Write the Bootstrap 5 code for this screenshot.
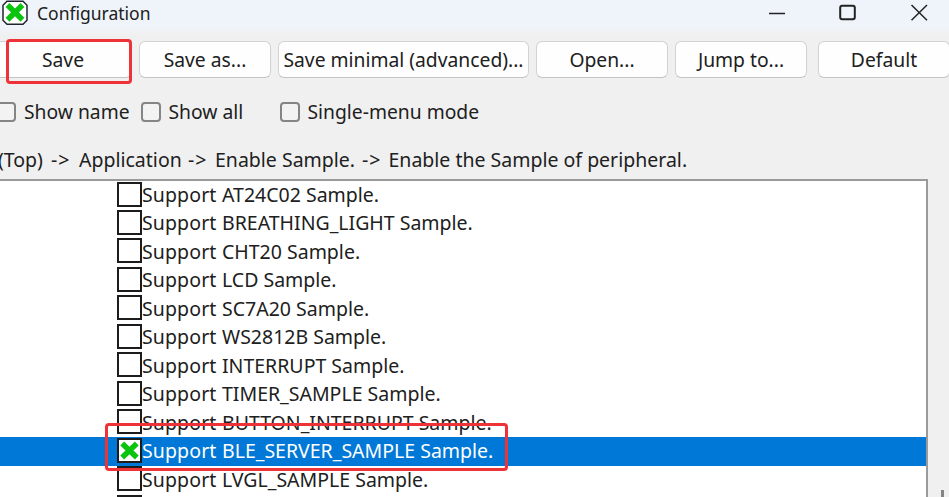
<!DOCTYPE html>
<html lang="en">
<head>
<meta charset="utf-8">
<title>Configuration</title>
<link rel="stylesheet" href="https://cdn.jsdelivr.net/npm/bootstrap@5.3.0/dist/css/bootstrap.min.css">
<style>
body{font-family:"Noto Sans","Open Sans",sans-serif;font-size:19.5px;line-height:28px;color:#202020;background:#f0f0f0;height:497px}
.title-bar{height:35px;background:linear-gradient(#eff4fb 75%,#f0f0f0);font-size:17.5px;padding-left:2px}
.title-bar .app-name{margin-left:9px;line-height:26px}
.win-ctl{width:71px;height:26px}
.win-set{margin-right:-4px}
.tool-bar{height:44px;padding-top:6px;gap:7px;margin-left:-6px}
.tool-bar .btn{height:37px;width:132px;padding:0;border:1.5px solid #d2d2d2;border-bottom-color:#c3c3c3;border-radius:6px;background:#fefefe;color:#202020;font:inherit;font-size:19.3px;line-height:34px;white-space:nowrap}
.tool-bar .b-save{width:138px}
.tool-bar .b-min{width:251px}
.tool-bar .b-def{margin-left:4px}
.opt-bar{height:62px;padding-top:20px;margin-left:-4px;font-size:19.3px}
.opt-bar .form-check-input{width:20px;height:20px;margin:3px 8px 0 0;border:2px solid #858585;border-radius:4px;background:#f3f3f3}
.opt-bar .form-check{min-height:0;padding:0;margin:0}
.opt-bar .form-check-input[type=checkbox]{float:none}
.opt-bar label{line-height:26px}
.w-a{width:144.5px}.w-b{width:139px}
.crumbs{height:38px;padding-top:6px;margin-left:-2px;font-size:19.5px;line-height:26px;white-space:pre}
.crumbs .arr{letter-spacing:1px}
.c1{width:53px}.c2{width:28px}.c3{width:109px}.c4{width:27px}.c5{width:147px}.c6{width:26.5px}
.tree{width:932px;height:331px;margin-left:-4px;border:2px solid #9a9a9a;border-bottom:0;background:#fff}
.tree-row{height:28.48px;padding-left:119px;line-height:27px;white-space:nowrap}
.tree-row.sel{background:#0078d7;color:#fff}
.tick{width:25px;height:25px;flex:none;margin-top:.5px;border:2px solid #1c1c1c;background:#fff}
.tree-row .w1{width:80px;letter-spacing:.12px}
.mark-box{border:3px solid #ed3338;border-radius:4px;pointer-events:none}
.m1{left:6px;top:39px;width:126px;height:45px}
.m2{left:105px;top:423px;width:403px;height:48px}
.corner{left:941px;top:490px;width:3px;height:7px;background:#858585}
</style>
</head>
<body class="overflow-hidden position-relative">
<header class="title-bar d-flex align-items-start">
  <svg width="26" height="26" viewBox="0 0 26 26"><path d="M5 1.2h16l4 4v15l-4 4H5l-4-4v-15z" fill="#fff" stroke="#202430" stroke-width="1.5"/><path d="M5.5 5 20.5 19.8M20.5 5 5.5 19.8" stroke="#0bc40f" stroke-width="5.5"/></svg>
  <span class="app-name">Configuration</span>
  <div class="d-flex ms-auto win-set">
    <svg class="win-ctl" viewBox="0 0 71 26"><path d="M29 13.5h16" stroke="#222" stroke-width="1.5"/></svg>
    <svg class="win-ctl" viewBox="0 0 71 26"><rect x="29.2" y="5.7" width="14.6" height="13.6" rx="2" fill="none" stroke="#222" stroke-width="2"/></svg>
    <svg class="win-ctl" viewBox="0 0 71 26"><path d="M29.5 5 45 20.2M45 5 29.5 20.2" stroke="#222" stroke-width="1.5"/></svg>
  </div>
</header>
<div class="tool-bar d-flex">
  <button class="btn flex-shrink-0 b-save">Save</button>
  <button class="btn flex-shrink-0">Save as...</button>
  <button class="btn flex-shrink-0 b-min">Save minimal (advanced)...</button>
  <button class="btn flex-shrink-0">Open...</button>
  <button class="btn flex-shrink-0">Jump to...</button>
  <button class="btn flex-shrink-0 b-def">Default</button>
</div>
<div class="opt-bar d-flex">
  <div class="form-check d-flex w-a"><input class="form-check-input" type="checkbox" id="o1"><label for="o1">Show name</label></div>
  <div class="form-check d-flex w-b"><input class="form-check-input" type="checkbox" id="o2"><label for="o2">Show all</label></div>
  <div class="form-check d-flex"><input class="form-check-input" type="checkbox" id="o3"><label for="o3">Single-menu mode</label></div>
</div>
<div class="crumbs d-flex"><span class="c1">(Top)</span><span class="arr c2">-&gt;</span><span class="c3">Application</span><span class="arr c4">-&gt;</span><span class="c5">Enable Sample.</span><span class="arr c6">-&gt;</span><span>Enable the Sample of peripheral.</span></div>
<main class="tree overflow-hidden">
  <div class="tree-row d-flex"><i class="tick"></i><span class="w1">Support</span><span>AT24C02 Sample.</span></div>
  <div class="tree-row d-flex"><i class="tick"></i><span class="w1">Support</span><span>BREATHING_LIGHT Sample.</span></div>
  <div class="tree-row d-flex"><i class="tick"></i><span class="w1">Support</span><span>CHT20 Sample.</span></div>
  <div class="tree-row d-flex"><i class="tick"></i><span class="w1">Support</span><span>LCD Sample.</span></div>
  <div class="tree-row d-flex"><i class="tick"></i><span class="w1">Support</span><span>SC7A20 Sample.</span></div>
  <div class="tree-row d-flex"><i class="tick"></i><span class="w1">Support</span><span>WS2812B Sample.</span></div>
  <div class="tree-row d-flex"><i class="tick"></i><span class="w1">Support</span><span>INTERRUPT Sample.</span></div>
  <div class="tree-row d-flex"><i class="tick"></i><span class="w1">Support</span><span>TIMER_SAMPLE Sample.</span></div>
  <div class="tree-row d-flex"><i class="tick"></i><span class="w1">Support</span><span>BUTTON_INTERRUPT Sample.</span></div>
  <div class="tree-row d-flex sel"><i class="tick d-flex"><svg width="21" height="21" viewBox="0 0 21 21"><path d="M3.2 3.5 17.8 17.5M17.8 3.5 3.2 17.5" stroke="#0bc40f" stroke-width="5.5"/></svg></i><span class="w1">Support</span><span>BLE_SERVER_SAMPLE Sample.</span></div>
  <div class="tree-row d-flex"><i class="tick"></i><span class="w1">Support</span><span>LVGL_SAMPLE Sample.</span></div>
  <div class="tree-row d-flex"><i class="tick"></i></div>
</main>
<div class="mark-box m1 position-absolute"></div>
<div class="mark-box m2 position-absolute"></div>
<div class="corner position-absolute"></div>
<script src="https://cdn.jsdelivr.net/npm/bootstrap@5.3.0/dist/js/bootstrap.bundle.min.js"></script>
</body>
</html>
